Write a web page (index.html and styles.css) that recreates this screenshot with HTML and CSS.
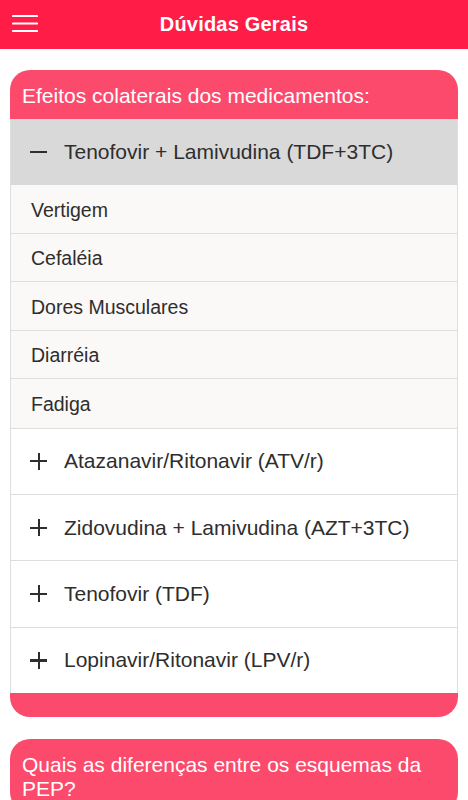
FILE: index.html
```html
<!DOCTYPE html>
<html lang="pt">
<head>
  <meta charset="UTF-8">
  <meta name="viewport" content="width=device-width, initial-scale=1.0">
  <title>Dúvidas Gerais</title>
  <link rel="stylesheet" href="styles.css">
</head>
<body>
  <header class="topbar">
    <button class="menu-btn" aria-label="Menu">
      <svg width="26" height="20" viewBox="0 0 26 20">
        <path d="M1 3h24M1 10.5h24M1 18h24" stroke="#fff" stroke-width="2.2" stroke-linecap="round"/>
      </svg>
    </button>
    <h1>Dúvidas Gerais</h1>
  </header>

  <main class="content">
    <section class="card">
      <h2 class="card-title">Efeitos colaterais dos medicamentos:</h2>
      <ul class="drugs">
        <li class="drug open">
          <div class="drug-head"><span class="sign minus"></span>Tenofovir + Lamivudina (TDF+3TC)</div>
          <ul class="effects">
            <li>Vertigem</li>
            <li>Cefaléia</li>
            <li>Dores Musculares</li>
            <li>Diarréia</li>
            <li>Fadiga</li>
          </ul>
        </li>
        <li class="drug"><div class="drug-head"><span class="sign plus"></span>Atazanavir/Ritonavir (ATV/r)</div></li>
        <li class="drug"><div class="drug-head"><span class="sign plus"></span>Zidovudina + Lamivudina (AZT+3TC)</div></li>
        <li class="drug"><div class="drug-head"><span class="sign plus"></span>Tenofovir (TDF)</div></li>
        <li class="drug"><div class="drug-head"><span class="sign plus"></span>Lopinavir/Ritonavir (LPV/r)</div></li>
      </ul>
    </section>

    <section class="card">
      <h2 class="card-title">Quais as diferenças entre os esquemas da PEP?</h2>
    </section>
  </main>
</body>
</html>
```

FILE: styles.css
```css
*, *::before, *::after {
  margin: 0;
  padding: 0;
  box-sizing: border-box;
}

body {
  font-family: "Liberation Sans", Arial, sans-serif;
  background: #fff;
  color: #2e2e2e;
}

.topbar {
  height: 49px;
  background-color: #ff1d47;
  display: flex;
  align-items: center;
  justify-content: center;
  position: relative;
}

.menu-btn {
  position: absolute;
  left: 12px;
  top: 13px;
  background: none;
  border: none;
  display: flex;
}

.topbar h1 {
  color: #fff;
  font-size: 20px;
  font-weight: bold;
  letter-spacing: 0.2px;
}

.content {
  padding: 21px 10px 0;
  display: flex;
  flex-direction: column;
  gap: 22px;
}

.card {
  background-color: #fc4a6d;
  border-radius: 20px;
  overflow: hidden;
}

.card-title {
  color: #fff;
  font-size: 21px;
  font-weight: normal;
  line-height: 24px;
  padding: 14px 12px 11px;
}

.drugs {
  list-style: none;
  background: #fff;
  border-left: 1px solid #dedede;
  border-right: 1px solid #dedede;
  margin-bottom: 24px;
}

.drug {
  border-bottom: 1px solid #dedede;
}

.drug:last-child {
  border-bottom: none;
}

.drug-head {
  height: 65.4px;
  display: flex;
  align-items: center;
  padding-left: 19px;
  font-size: 21px;
}

.drug.open .drug-head {
  height: 66px;
  background-color: #d9d9d9;
}

.sign {
  width: 17px;
  height: 17px;
  margin-right: 17px;
  position: relative;
}

.sign::before,
.sign::after {
  content: "";
  position: absolute;
  background: #2e2e2e;
}

.sign::before {
  left: 0;
  right: 0;
  top: 7.5px;
  height: 2.2px;
}

.plus::after {
  top: 0;
  bottom: 0;
  left: 7.5px;
  width: 2.2px;
}

.effects {
  list-style: none;
  background-color: #fbf8f8;
}

.effects li {
  height: 48.5px;
  display: flex;
  align-items: center;
  padding: 3px 0 0 20px;
  font-size: 19.5px;
  border-bottom: 1px solid #dedede;
}

.effects li:last-child {
  border-bottom: none;
}
```
